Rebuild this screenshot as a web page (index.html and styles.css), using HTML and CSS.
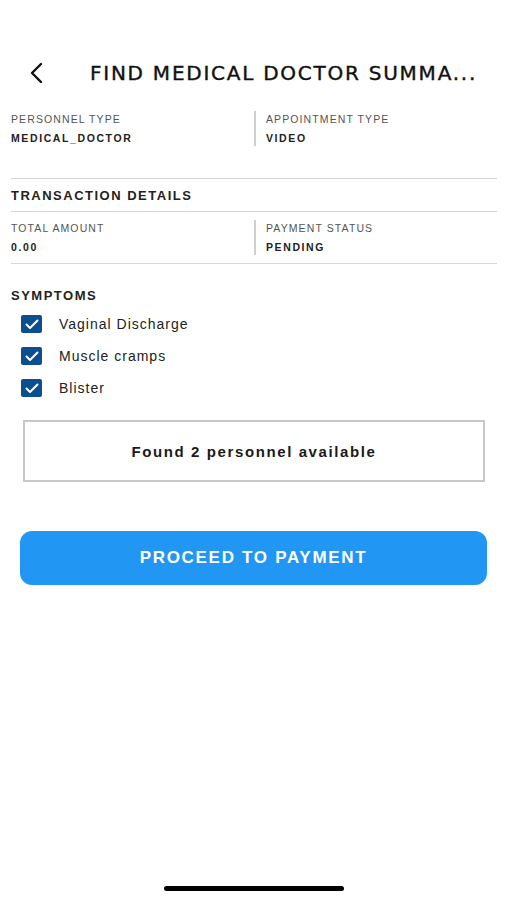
FILE: index.html
```html
<!DOCTYPE html>
<html lang="en">
<head>
    <meta charset="UTF-8">
    <meta name="viewport" content="width=device-width, initial-scale=1.0">
    <title>Find Medical Doctor Summary</title>
    <link rel="stylesheet" href="styles.css">
</head>
<body>

<div class="screen">
    <div class="header">
        <svg class="back" width="16" height="22" viewBox="0 0 16 22">
            <path d="M13 2 L4 11 L13 20" fill="none" stroke="#111" stroke-width="2.4" stroke-linecap="round" stroke-linejoin="round"/>
        </svg>
        <h1 class="title">FIND MEDICAL DOCTOR SUMMA...</h1>
    </div>

    <div class="info-row first">
        <div class="info-cell">
            <div class="label">PERSONNEL TYPE</div>
            <div class="value">MEDICAL_DOCTOR</div>
        </div>
        <div class="info-cell divided">
            <div class="label">APPOINTMENT TYPE</div>
            <div class="value">VIDEO</div>
        </div>
    </div>

    <div class="section-title bordered">TRANSACTION DETAILS</div>

    <div class="info-row second">
        <div class="info-cell">
            <div class="label">TOTAL AMOUNT</div>
            <div class="value">0.00</div>
        </div>
        <div class="info-cell divided">
            <div class="label">PAYMENT STATUS</div>
            <div class="value">PENDING</div>
        </div>
    </div>

    <div class="section-title">SYMPTOMS</div>
    <ul class="symptoms">
        <li><span class="check"><svg width="14" height="11" viewBox="0 0 14 11"><path d="M1.5 5.5 L5 9 L12.5 1.5" fill="none" stroke="#fff" stroke-width="2" stroke-linecap="round" stroke-linejoin="round"/></svg></span>Vaginal Discharge</li>
        <li><span class="check"><svg width="14" height="11" viewBox="0 0 14 11"><path d="M1.5 5.5 L5 9 L12.5 1.5" fill="none" stroke="#fff" stroke-width="2" stroke-linecap="round" stroke-linejoin="round"/></svg></span>Muscle cramps</li>
        <li><span class="check"><svg width="14" height="11" viewBox="0 0 14 11"><path d="M1.5 5.5 L5 9 L12.5 1.5" fill="none" stroke="#fff" stroke-width="2" stroke-linecap="round" stroke-linejoin="round"/></svg></span>Blister</li>
    </ul>

    <div class="found-box">Found 2 personnel available</div>

    <button class="pay-btn" type="button">PROCEED TO PAYMENT</button>

    <div class="home-bar"></div>
</div>

</body>
</html>
```

FILE: styles.css
```css
body {
    margin: 0;
    background-color: #fff;
    font-family: "Liberation Sans", Arial, sans-serif;
    color: #222;
}
.screen {
    width: 507px;
    height: 900px;
    position: relative;
    padding: 0 10px 0 11px;
    box-sizing: border-box;
}
.header {
    display: flex;
    align-items: center;
    height: 36px;
    padding-top: 55px;
    margin-bottom: 20px;
}
.back {
    margin-left: 17px;
    margin-right: 46px;
}
.title {
    margin: 0;
    font-family: "DejaVu Sans", sans-serif;
    font-size: 20px;
    font-weight: normal;
    letter-spacing: 1.75px;
    -webkit-text-stroke: 0.4px #111;
    color: #111;
    white-space: nowrap;
}
.info-row {
    display: grid;
    grid-template-columns: 1fr 1fr;
    border-bottom: 1px solid #d6d6d6;
}
.info-row.first {
    padding-bottom: 32px;
}
.info-row.second {
    padding-top: 8px;
    padding-bottom: 8px;
}
.info-cell.divided {
    border-left: 2px solid #cfcfcf;
    padding-left: 10px;
}
.label {
    font-size: 10.5px;
    letter-spacing: 1.1px;
    color: #555;
    line-height: 14px;
    padding-top: 1px;
}
.value {
    font-size: 10.5px;
    font-weight: bold;
    letter-spacing: 1.6px;
    color: #222;
    line-height: 14px;
    margin-top: 5px;
    padding-bottom: 1px;
}
.section-title {
    font-size: 13px;
    font-weight: bold;
    letter-spacing: 1.5px;
    color: #222;
    line-height: 16px;
}
.section-title.bordered {
    padding: 9px 0 7px;
    border-bottom: 1px solid #d6d6d6;
}
.info-row.second + .section-title {
    margin-top: 24px;
}
.symptoms {
    list-style: none;
    margin: 4px 0 0;
    padding: 0 0 0 10px;
}
.symptoms li {
    display: flex;
    align-items: center;
    height: 32px;
    font-size: 14px;
    letter-spacing: 1px;
    color: #222;
}
.check {
    width: 21px;
    height: 18px;
    border-radius: 2px;
    background-color: #0b4f8f;
    display: flex;
    align-items: center;
    justify-content: center;
    margin-right: 17px;
}
.found-box {
    margin: 16px 12px 0 12px;
    height: 58px;
    border: 2px solid #c8c8c8;
    display: flex;
    align-items: center;
    justify-content: center;
    font-size: 15px;
    font-weight: bold;
    letter-spacing: 1.6px;
    color: #1a1a1a;
}
.pay-btn {
    display: block;
    width: 467px;
    height: 54px;
    margin: 49px 0 0 9px;
    background-color: #2196f3;
    color: #fff;
    border: none;
    border-radius: 12px;
    font-family: "Liberation Sans", Arial, sans-serif;
    font-size: 17px;
    font-weight: bold;
    letter-spacing: 1.7px;
    cursor: pointer;
}
.home-bar {
    position: absolute;
    left: 164px;
    bottom: 9px;
    width: 180px;
    height: 5px;
    border-radius: 3px;
    background-color: #000;
}
```
